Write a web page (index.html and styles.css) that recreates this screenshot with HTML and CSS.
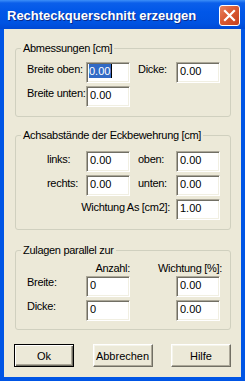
FILE: index.html
```html
<!DOCTYPE html>
<html lang="de">
<head>
    <meta charset="UTF-8">
    <title>Rechteckquerschnitt erzeugen</title>
    <link rel="stylesheet" href="styles.css">
</head>
<body>

    <div class="window">
        <div class="titlebar">
            <span class="title">Rechteckquerschnitt erzeugen</span>
            <span class="close">
                <svg width="19" height="19" viewBox="0 0 19 19">
                    <path d="M5 5 L14 14 M14 5 L5 14" stroke="#fff" stroke-width="2.2" stroke-linecap="square"/>
                </svg>
            </span>
        </div>

        <div class="client">
            <fieldset class="group g-dims">
                <legend>Abmessungen [cm]</legend>
                <div class="grid">
                    <span class="lbl">Breite oben:</span>
                    <span class="field"><span class="sel">0.00</span><span class="caret"></span></span>
                    <span class="lbl right">Dicke:</span>
                    <span class="field">0.00</span>
                    <span class="lbl">Breite unten:</span>
                    <span class="field">0.00</span>
                </div>
            </fieldset>

            <fieldset class="group g-axis">
                <legend>Achsabstände der Eckbewehrung [cm]</legend>
                <div class="grid">
                    <span class="lbl indent">links:</span>
                    <span class="field">0.00</span>
                    <span class="lbl right">oben:</span>
                    <span class="field">0.00</span>
                    <span class="lbl indent">rechts:</span>
                    <span class="field">0.00</span>
                    <span class="lbl right">unten:</span>
                    <span class="field">0.00</span>
                    <span class="lbl wide">Wichtung As [cm2]:</span>
                    <span class="field">1.00</span>
                </div>
            </fieldset>

            <fieldset class="group g-extra">
                <legend>Zulagen parallel zur</legend>
                <div class="grid">
                    <span class="head c2">Anzahl:</span>
                    <span class="head c4">Wichtung [%]:</span>
                    <span class="lbl low">Breite:</span>
                    <span class="field">0</span>
                    <span class="field c4">0.00</span>
                    <span class="lbl low">Dicke:</span>
                    <span class="field">0</span>
                    <span class="field c4">0.00</span>
                </div>
            </fieldset>

            <div class="buttons">
                <button class="default">Ok</button>
                <button>Abbrechen</button>
                <button>Hilfe</button>
            </div>
        </div>
    </div>

</body>
</html>
```

FILE: styles.css
```css
* {
    box-sizing: border-box;
}

body {
    margin: 0;
    font-family: "Liberation Sans", Arial, sans-serif;
    font-size: 11px;
    letter-spacing: -0.3px;
    color: #000;
    background: #ece9d8;
}

.window {
    width: 245px;
    height: 381px;
    display: flex;
    flex-direction: column;
    background: #0055e5;
    padding: 0 4px 4px 4px;
}

.titlebar {
    height: 29px;
    margin: 0 -4px;
    display: flex;
    align-items: center;
    justify-content: space-between;
    padding: 0 5px 0 7px;
    background: linear-gradient(#3d8ff8 0, #0b5fea 3px, #0157e8 40%, #0053e2 80%, #0049d4 100%);
}

.title {
    font-size: 13px;
    font-weight: bold;
    letter-spacing: 0;
    color: #fff;
    text-shadow: 1px 1px 0 #0a2a8a;
    margin-top: 1px;
}

.close {
    width: 21px;
    height: 21px;
    display: flex;
    align-items: center;
    justify-content: center;
    border: 1px solid #fff;
    border-radius: 3px;
    background: linear-gradient(135deg, #e8825f 0, #da5a33 45%, #c5401c 100%);
    margin-top: 2px;
}

.client {
    flex: 1;
    background: #ece9d8;
    padding: 0 10px;
}

.group {
    margin: 0 0 0 1px;
    border: 1px solid #d0d0bf;
    border-radius: 3px;
    padding: 0 10px 9px 11px;
}

.group legend {
    margin-left: -6px;
    padding: 0 2px;
    line-height: 13px;
    white-space: nowrap;
}

.g-dims {
    margin-top: 13px;
}

.g-dims .grid {
    padding-top: 7px;
}

.g-axis {
    margin-top: 12px;
}

.g-axis .grid {
    padding-top: 9px;
}

.g-extra {
    margin-top: 14px;
    padding-bottom: 8px;
}

.g-extra .grid {
    padding-top: 5px;
    grid-template-rows: 14px 24px 21px;
    row-gap: 0;
}

.grid {
    display: grid;
    grid-template-columns: 59px 44px 46px 44px;
    grid-auto-rows: 21px;
    row-gap: 3px;
    align-items: start;
}

.lbl {
    white-space: nowrap;
    line-height: 13px;
    margin-top: 1px;
}

.lbl.right {
    padding-left: 8px;
}

.lbl.indent {
    padding-left: 20px;
    margin-top: 2px;
}

.g-axis .lbl.right {
    margin-top: 2px;
}

.lbl.wide {
    grid-column: 1 / 4;
    text-align: right;
    padding-right: 6px;
    margin-top: 2px;
}

.lbl.low {
    margin-top: 0;
}

.head {
    white-space: nowrap;
    line-height: 13px;
    justify-self: end;
}

.c2 {
    grid-column: 2;
}

.c4 {
    grid-column: 4;
}

.head.c4 {
    margin-right: -2px;
}

.field {
    width: 44px;
    height: 21px;
    display: flex;
    align-items: flex-start;
    line-height: 13px;
    background: #fff;
    border: 1px solid;
    border-color: #aca899 #fff #fff #aca899;
    box-shadow: inset 1px 1px 0 #716f64, inset -1px -1px 0 #f1efe2;
    padding: 2px 2px 0 3px;
    letter-spacing: 0;
}

.sel {
    background: #316ac5;
    color: #fff;
    padding-right: 1px;
    margin-left: -1px;
    margin-top: -1px;
    line-height: 14px;
}

.caret {
    width: 1px;
    height: 14px;
    margin-top: -1px;
    background: #000;
}

.buttons {
    display: flex;
    justify-content: space-between;
    margin-top: 14px;
}

button {
    width: 60px;
    height: 23px;
    padding: 0;
    font-family: inherit;
    font-size: 11px;
    letter-spacing: 0;
    color: #000;
    background: #ece9d8;
    border: 1px solid;
    border-color: #fff #716f64 #716f64 #fff;
    box-shadow: inset -1px -1px 0 #aca899, inset 1px 1px 0 #f5f4ea;
}

button.default {
    border-color: #000;
    box-shadow: inset 1px 1px 0 #fff, inset -1px -1px 0 #716f64, inset -2px -2px 0 #aca899;
}
```
